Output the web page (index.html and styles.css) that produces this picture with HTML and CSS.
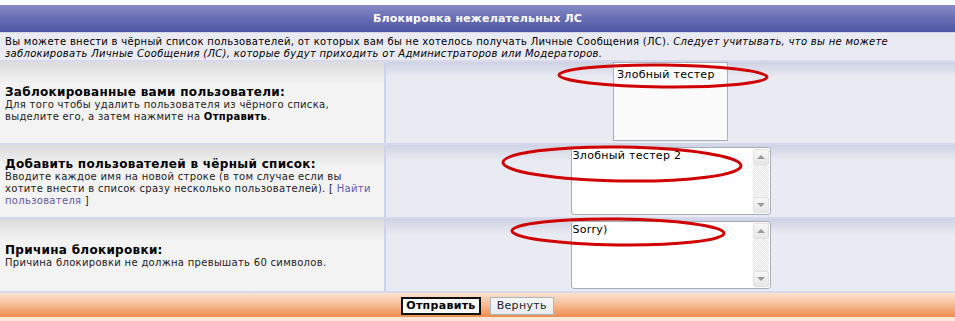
FILE: index.html
```html
<!DOCTYPE html>
<html lang="ru">

<head>
    <meta charset="UTF-8">
    <title>Блокировка нежелательных ЛС</title>
    <link rel="stylesheet" href="styles.css">
</head>

<body>

    <div class="page">
        <table class="forumline">
            <tr>
                <th colspan="2" class="thHead">Блокировка нежелательных ЛС</th>
            </tr>
            <tr>
                <td colspan="2" class="intro">
                    Вы можете внести в чёрный список пользователей, от которых вам бы не хотелось получать Личные Сообщения (ЛС).
                    <i>Следует учитывать, что вы не можете</i><br>
                    <i>заблокировать Личные Сообщения (ЛС), которые будут приходить от Администраторов или Модераторов.</i>
                </td>
            </tr>
            <tr class="row-blocked">
                <td class="row1">
                    <span class="gen">Заблокированные вами пользователи:</span><br>
                    <span class="gensmall">Для того чтобы удалить пользователя из чёрного списка,<br>выделите его, а затем нажмите на <b>Отправить</b>.</span>
                </td>
                <td class="row2">
                    <select class="blocked-list" multiple size="5">
                        <option>Злобный тестер</option>
                    </select>
                </td>
            </tr>
            <tr class="row-add">
                <td class="row1">
                    <span class="gen">Добавить пользователей в чёрный список:</span><br>
                    <span class="gensmall">Вводите каждое имя на новой строке (в том случае если вы<br>хотите внести в список сразу несколько пользователей). [ <a href="#">Найти</a><br><a href="#">пользователя</a> ]</span>
                </td>
                <td class="row2">
                    <div class="textbox">
                        <textarea rows="4">Злобный тестер 2</textarea>
                        <div class="scrollbar">
                            <span class="sb-btn"><span class="arrow-up"></span></span>
                            <span class="sb-track"></span>
                            <span class="sb-btn"><span class="arrow-down"></span></span>
                        </div>
                    </div>
                </td>
            </tr>
            <tr class="row-reason">
                <td class="row1">
                    <span class="gen">Причина блокировки:</span><br>
                    <span class="gensmall">Причина блокировки не должна превышать 60 символов.</span>
                </td>
                <td class="row2">
                    <div class="textbox">
                        <textarea rows="4">Sorry)</textarea>
                        <div class="scrollbar">
                            <span class="sb-btn"><span class="arrow-up"></span></span>
                            <span class="sb-track"></span>
                            <span class="sb-btn"><span class="arrow-down"></span></span>
                        </div>
                    </div>
                </td>
            </tr>
            <tr>
                <td colspan="2" class="catBottom">
                    <input type="submit" class="mainoption" value="Отправить">
                    <input type="reset" class="liteoption" value="Вернуть">
                </td>
            </tr>
        </table>
        <div class="bottom-strip"></div>

        <!-- пометки красным поверх формы -->
        <svg class="marks" width="955" height="321" viewBox="0 0 955 321">
            <ellipse cx="663" cy="76" rx="104" ry="11" transform="rotate(0.6 663 76)" />
            <ellipse cx="622" cy="164" rx="119" ry="17" transform="rotate(0.8 622 164)" />
            <ellipse cx="618" cy="232" rx="106" ry="13" transform="rotate(0.7 618 232)" />
        </svg>
    </div>

</body>

</html>
```

FILE: styles.css
```css
body {
    margin: 0;
    background-color: #fff;
    font-family: Verdana, "DejaVu Sans", sans-serif;
    color: #000;
}

.page {
    position: relative;
    width: 955px;
    padding-top: 5px;
}

.forumline {
    width: 100%;
    border-collapse: separate;
    border-spacing: 0;
}

.forumline td,
.forumline th {
    padding: 0;
    box-sizing: border-box;
}

.thHead {
    height: 28px;
    background: linear-gradient(#878cc7, #6a70b5 45%, #4f56a3);
    color: #fff;
    font-size: 11px;
    font-weight: bold;
    letter-spacing: 0.2px;
    text-align: center;
    border-bottom: 1px solid #d3d5e8;
}

.intro {
    height: 29px;
    padding: 3px 5px 0 5px !important;
    background-color: #e9eaf2;
    font-size: 10px;
    line-height: 12px;
    letter-spacing: 0.3px;
    vertical-align: top;
    white-space: nowrap;
    border-bottom: 2px solid #d6d9ec;
}

.row1 {
    width: 386px;
    padding-left: 5px !important;
    background: linear-gradient(#dcdcdc, #f3f3f3 22px);
    border-right: 2px solid #cfd3ea;
    border-bottom: 2px solid #d6d9ec;
    vertical-align: middle;
    font-size: 10px;
    line-height: 12px;
}

.row2 {
    background: linear-gradient(#cfd2e4, #eaebf2 16px);
    border-bottom: 2px solid #d6d9ec;
    text-align: center;
    font-size: 10px;
    line-height: 12px;
}

.row-blocked td {
    height: 83px;
    vertical-align: top;
}

.row-blocked td.row1 {
    vertical-align: middle;
    padding-top: 2px !important;
}

.row-add td {
    height: 74px;
}

.row-add td.row1,
.row-reason td.row1 {
    padding-top: 2px !important;
}

.row-reason td {
    height: 74px;
}

.gen {
    font-size: 12px;
    font-weight: bold;
    line-height: 14px;
    letter-spacing: 0.3px;
}

.gensmall {
    font-size: 10px;
    line-height: 12px;
    letter-spacing: 0.3px;
    color: #222;
}

.gensmall b {
    color: #000;
}

a {
    color: #5f5aa8;
    text-decoration: none;
}

.blocked-list {
    display: block;
    margin: 0 auto;
    width: 115px;
    height: 79px;
    padding: 5px 1px 3px;
    border: 1px solid #a9b0c0;
    border-radius: 0;
    background-color: #fafafa;
    font-family: Verdana, "DejaVu Sans", sans-serif;
    font-size: 11px;
    letter-spacing: 0.3px;
    color: #000;
    overflow: hidden;
}

.blocked-list option {
    padding: 0 2px;
}

.textbox {
    display: flex;
    margin: 0 auto;
    width: 200px;
    height: 68px;
    box-sizing: border-box;
    border: 1px solid #a6adb9;
    border-radius: 3px;
    background-color: #fff;
    text-align: left;
}

.textbox textarea {
    flex: 1;
    border: none;
    resize: none;
    outline: none;
    padding: 1px 1px;
    margin: 0;
    font-family: Verdana, "DejaVu Sans", sans-serif;
    font-size: 11px;
    line-height: 14px;
    letter-spacing: 0.3px;
    color: #000;
    overflow: hidden;
    background: transparent;
}

.scrollbar {
    display: flex;
    flex-direction: column;
    width: 16px;
    margin: 1px 1px 1px 0;
}

.sb-btn {
    display: flex;
    justify-content: center;
    align-items: center;
    height: 16px;
    border: 1px solid #e0e0e0;
    border-radius: 2px;
    background: linear-gradient(#f7f7f7, #e6e6e6);
    box-sizing: border-box;
}

.sb-track {
    flex: 1;
    background: repeating-conic-gradient(#e4e4e4 0 25%, #fff 0 50%) 0 0 / 2px 2px;
}

.arrow-up {
    width: 0;
    height: 0;
    border-left: 4px solid transparent;
    border-right: 4px solid transparent;
    border-bottom: 4px solid #9a9a9a;
}

.arrow-down {
    width: 0;
    height: 0;
    border-left: 4px solid transparent;
    border-right: 4px solid transparent;
    border-top: 4px solid #9a9a9a;
}

.catBottom {
    height: 24px;
    background: linear-gradient(#fce2d0, #f6bf9a 45%, #ee8c4c);
    text-align: center;
    vertical-align: middle;
}

.mainoption,
.liteoption {
    font-family: Verdana, "DejaVu Sans", sans-serif;
    font-size: 11px;
    letter-spacing: 0.3px;
    height: 18px;
    margin: 0 2px;
    vertical-align: middle;
    cursor: pointer;
}

.mainoption {
    padding: 0 3px;
    font-weight: bold;
    background-color: #fafafa;
    border: 2px solid #111;
    color: #000;
}

.liteoption {
    padding: 0 6px;
    background: linear-gradient(#f6f7f9, #e8ebf0);
    border: 1px solid #a9b7c3;
    color: #222;
}

.bottom-strip {
    height: 4px;
    background-color: #fbe6d8;
}

.marks {
    position: absolute;
    top: 0;
    left: 0;
    pointer-events: none;
}

.marks ellipse {
    fill: none;
    stroke: #d10000;
    stroke-width: 3;
}
```
